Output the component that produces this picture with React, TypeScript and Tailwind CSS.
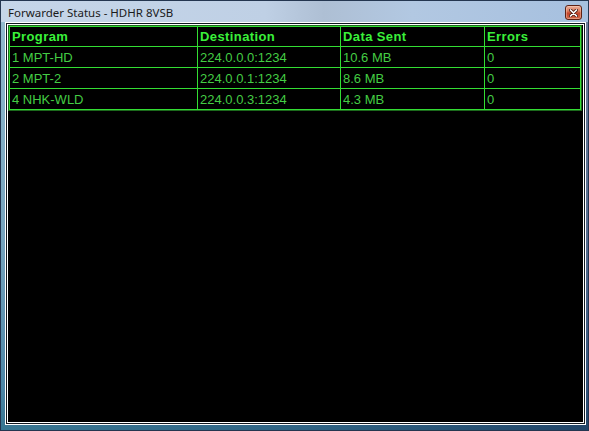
import React from 'react';

type Row = { program: string; destination: string; sent: string; errors: string };

const rows: Row[] = [
    { program: '1 MPT-HD', destination: '224.0.0.0:1234', sent: '10.6 MB', errors: '0' },
    { program: '2 MPT-2', destination: '224.0.0.1:1234', sent: '8.6 MB', errors: '0' },
    { program: '4 NHK-WLD', destination: '224.0.0.3:1234', sent: '4.3 MB', errors: '0' },
];

const headers = ['Program', 'Destination', 'Data Sent', 'Errors'];
const widths = ['w-[188px]', 'w-[143px]', 'w-[144px]', ''];

const CloseButton = () => (
    <div className="w-[17px] h-[15px] rounded-[3px] border border-[#5e2114] bg-[linear-gradient(180deg,#eab09c_0%,#dc7a5c_40%,#c4442a_55%,#d0684a_100%)] flex items-center justify-center shadow-[inset_0_0_0_1px_rgba(255,220,200,0.4)]">
        <svg width="9" height="8" viewBox="0 0 9 8">
            <path d="M1.5 1 L7.5 7 M7.5 1 L1.5 7" stroke="#4a1a10" strokeWidth="3.2" strokeLinecap="round" />
            <path d="M1.5 1 L7.5 7 M7.5 1 L1.5 7" stroke="#ffffff" strokeWidth="1.7" strokeLinecap="round" />
        </svg>
    </div>
);

export default function App() {
    return (
        <div className="w-[589px] h-[431px] flex flex-col border border-[#243650] bg-[linear-gradient(90deg,rgba(70,150,170,0.35)_0%,rgba(40,90,130,0.1)_50%,rgba(15,30,70,0.45)_100%),linear-gradient(180deg,#c9d8ea_0%,#b4c8df_8%,#8fabc9_55%,#4f7ea6_90%,#2f6483_100%)] overflow-hidden">
            <div className="h-[21px] shrink-0 flex items-center justify-between pl-[7px] pr-[6px] bg-[linear-gradient(90deg,#c6d6e9_0%,#bfd0e5_45%,#aebfd4_55%,#b2c8e2_70%,#a6c0df_100%)]">
                <span className="text-[11.5px] text-[#1b1b1b] leading-none pt-[2px] font-['Noto_Sans',sans-serif]">
                    Forwarder Status - HDHR 8VSB
                </span>
                <div className="pt-[2px]">
                    <CloseButton />
                </div>
            </div>
            <div className="flex-1 ml-[4px] mr-[2px] mb-[5px] border border-white bg-[#101820] p-px">
                <div className="h-full border border-white bg-black pt-0 pr-px">
                    <div className="border border-[#1c6a1c]">
                        <table className="w-full border-collapse border border-[#33dd33] font-['Liberation_Sans',Arial,sans-serif]">
                            <thead>
                                <tr className="h-[20px]">
                                    {headers.map((h, i) => (
                                        <th
                                            key={h}
                                            className={`${widths[i]} border border-[#33dd33] text-left pl-[2px] py-0 text-[13px] font-bold tracking-[0.4px] text-[#3af03a] leading-none`}
                                        >
                                            {h}
                                        </th>
                                    ))}
                                </tr>
                            </thead>
                            <tbody>
                                {rows.map(r => (
                                    <tr key={r.program} className="h-[21px]">
                                        {[r.program, r.destination, r.sent, r.errors].map((v, i) => (
                                            <td
                                                key={i}
                                                className="border border-[#33dd33] pl-[2px] py-0 text-[13px] text-[#44cc44] leading-none"
                                            >
                                                {v}
                                            </td>
                                        ))}
                                    </tr>
                                ))}
                            </tbody>
                        </table>
                    </div>
                </div>
            </div>
        </div>
    );
}
